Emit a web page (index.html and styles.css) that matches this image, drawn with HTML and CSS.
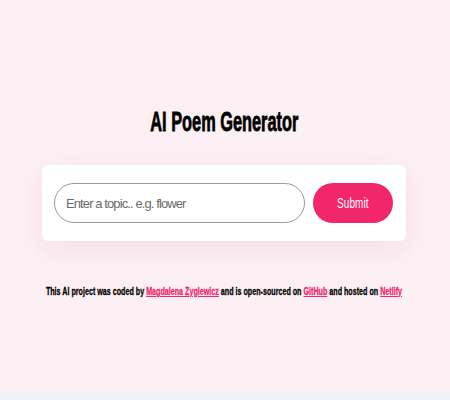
FILE: index.html
```html
<!DOCTYPE html>
<html>
<head>
<meta charset="utf-8">
<link rel="stylesheet" href="styles.css">
</head>
<body>
<div class="page">
  <div class="container">
    <h1 class="title"><span class="narrow title-text">AI Poem Generator</span></h1>
    <form class="card">
      <input class="topic" type="text" placeholder="Enter a topic.. e.g. flower">
      <button class="submit" type="button"><span class="narrow submit-text">Submit</span></button>
    </form>
    <footer class="footer"><span class="narrow footer-text">This AI project was coded by <a href="#">Magdalena Zyglewicz</a> and is open-sourced on <a href="#">GitHub</a> and hosted on <a href="#">Netlify</a></span></footer>
  </div>
</div>
</body>
</html>
```
FILE: styles.css
```css
html, body {
  margin: 0;
  padding: 0;
}
body {
  background: #eff2f6;
  font-family: "Liberation Sans", Arial, sans-serif;
}
.page {
  background: #fdf0f4;
  height: 392px;
}
.container {
  width: 364px;
  margin: 0 auto;
  padding-top: 106px;
  transform: translateX(-1px);
}
.narrow {
  display: inline-block;
  white-space: nowrap;
  transform-origin: center;
}
.title {
  display: flex;
  justify-content: center;
  margin: 0 0 27px;
  font-size: 27px;
  font-weight: 700;
  color: #000;
  line-height: 32px;
}
.title-text {
  transform: scaleX(0.605);
  -webkit-text-stroke: 0.8px #000;
}
.card {
  display: flex;
  gap: 8px;
  align-items: center;
  background: #fff;
  border-radius: 6px;
  padding: 18px 13px 18px 12px;
  box-shadow: 0 8px 30px rgba(200, 150, 170, 0.18);
  margin: 0;
}
.topic {
  flex: 1;
  height: 40px;
  box-sizing: border-box;
  border: 1px solid #9b97a8;
  border-radius: 20px;
  padding: 0 11px;
  font-family: inherit;
  font-size: 13px;
  letter-spacing: -0.9px;
  color: #333;
  outline: none;
}
.topic::placeholder {
  color: #6b6b6b;
}
.submit {
  display: flex;
  justify-content: center;
  align-items: center;
  width: 80px;
  height: 40px;
  border: none;
  border-radius: 20px;
  background: #f1266b;
  color: #fff;
  font-family: inherit;
  font-size: 14px;
  padding: 0;
}
.submit-text {
  transform: scaleX(0.72);
}
.footer {
  display: flex;
  justify-content: center;
  margin-top: 44px;
  font-size: 11px;
  font-weight: 700;
  color: #000;
}
.footer-text {
  transform: scaleX(0.65);
  -webkit-text-stroke: 0.3px #000;
}
.footer a {
  color: #f1266b;
  -webkit-text-stroke: 0.3px #f1266b;
}
```
